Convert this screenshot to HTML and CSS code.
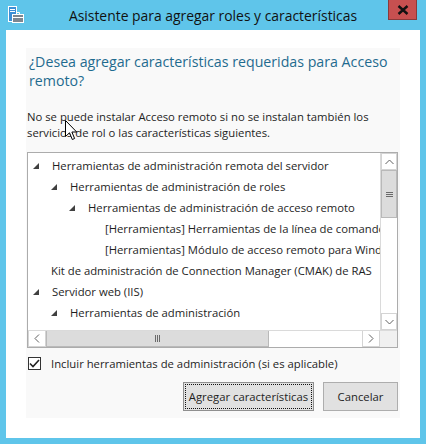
FILE: index.html
```html
<!DOCTYPE html>
<html lang="es">
<head>
<meta charset="utf-8">
<title>Asistente para agregar roles y características</title>
<link rel="stylesheet" href="styles.css">
</head>
<body>
<div class="window">
  <div class="titlebar">
    <svg class="app-icon" width="16" height="17" viewBox="0 0 16 17">
      <rect x="0.5" y="0.5" width="8" height="15" fill="#3d8fd6" stroke="#fff"/>
      <rect x="2" y="3" width="5" height="1" fill="#fff"/>
      <rect x="2" y="5" width="5" height="1" fill="#fff"/>
      <rect x="4.5" y="8.5" width="11" height="8" fill="#7d8791" stroke="#fff"/>
      <path d="M8.5 8.5 V6.5 H11.5 V8.5" fill="none" stroke="#fff"/>
      <rect x="5" y="11" width="10" height="1" fill="#fff"/>
    </svg>
    <div class="title">Asistente para agregar roles y características</div>
    <div class="close">
      <svg width="12" height="10" viewBox="0 0 12 10"><path d="M1.5 1 L10.5 9 M10.5 1 L1.5 9" stroke="#111" stroke-width="2.4"/></svg>
    </div>
  </div>
  <div class="client">
    <div class="panel">
      <h1 class="heading">¿Desea agregar características requeridas para Acceso remoto?</h1>
      <p class="desc">No se puede instalar Acceso remoto si no se instalan también los servicios de rol o las características siguientes.</p>
      <div class="listbox">
        <div class="list-main">
          <div class="rows">
            <div class="row l0"><span class="exp"><svg width="6" height="6" viewBox="0 0 6 6"><path d="M6 0 V6 H0 Z" fill="#404040"/></svg></span>Herramientas de administración remota del servidor</div>
            <div class="row l1"><span class="exp"><svg width="6" height="6" viewBox="0 0 6 6"><path d="M6 0 V6 H0 Z" fill="#404040"/></svg></span>Herramientas de administración de roles</div>
            <div class="row l2"><span class="exp"><svg width="6" height="6" viewBox="0 0 6 6"><path d="M6 0 V6 H0 Z" fill="#404040"/></svg></span>Herramientas de administración de acceso remoto</div>
            <div class="row l4">[Herramientas] Herramientas de la línea de comandos de Acceso remoto</div>
            <div class="row l4">[Herramientas] Módulo de acceso remoto para Windows PowerShell</div>
            <div class="row l1">Kit de administración de Connection Manager (CMAK) de RAS</div>
            <div class="row l0"><span class="exp"><svg width="6" height="6" viewBox="0 0 6 6"><path d="M6 0 V6 H0 Z" fill="#404040"/></svg></span>Servidor web (IIS)</div>
            <div class="row l1"><span class="exp"><svg width="6" height="6" viewBox="0 0 6 6"><path d="M6 0 V6 H0 Z" fill="#404040"/></svg></span>Herramientas de administración</div>
            <div class="row l3">[Herramientas] Consola de administración de IIS</div>
          </div>
          <div class="vscroll">
            <div class="sbtn"><svg width="9" height="6" viewBox="0 0 9 6"><path d="M0.5 5 L4.5 1 L8.5 5" fill="none" stroke="#606060"/></svg></div>
            <div class="vthumb"><svg width="7" height="5" viewBox="0 0 7 5"><path d="M0 0.5 H7 M0 2.5 H7 M0 4.5 H7" stroke="#6a6a6a"/></svg></div>
            <div class="vtrack"></div>
            <div class="sbtn"><svg width="9" height="6" viewBox="0 0 9 6"><path d="M0.5 1 L4.5 5 L8.5 1" fill="none" stroke="#606060"/></svg></div>
          </div>
        </div>
        <div class="hscroll">
          <div class="hbtn"><svg width="6" height="9" viewBox="0 0 6 9"><path d="M5 0.5 L1 4.5 L5 8.5" fill="none" stroke="#606060"/></svg></div>
          <div class="hthumb"><svg width="5" height="7" viewBox="0 0 5 7"><path d="M0.5 0 V7 M2.5 0 V7 M4.5 0 V7" stroke="#6a6a6a"/></svg></div>
          <div class="htrack"></div>
          <div class="hbtn"><svg width="6" height="9" viewBox="0 0 6 9"><path d="M1 0.5 L5 4.5 L1 8.5" fill="none" stroke="#606060"/></svg></div>
          <div class="corner"></div>
        </div>
      </div>
      <label class="check">
        <span class="box"><svg width="11" height="9" viewBox="0 0 11 9"><path d="M1 4.5 L4 7.5 L10 1" fill="none" stroke="#222" stroke-width="1.6"/></svg></span>
        Incluir herramientas de administración (si es aplicable)
      </label>
      <div class="buttons">
        <button class="btn btn-add">Agregar características</button>
        <button class="btn btn-cancel">Cancelar</button>
      </div>
    </div>
  </div>
  <svg class="cursor" width="13" height="21" viewBox="0 0 13 21">
    <path d="M0.5 0.5 V16.5 L4.5 12.8 L7.3 19.5 L9.6 18.5 L6.9 12 L11.7 12 Z" fill="#fff" stroke="#000" stroke-linejoin="round"/>
  </svg>
</div>
</body>
</html>
```
FILE: styles.css
```css
html, body {
  margin: 0;
  padding: 0;
}
body {
  background: #5fc5ea;
  font-family: "Open Sans", "Noto Sans", sans-serif;
  color: #1e1e1e;
}
.window {
  position: relative;
  width: 426px;
  height: 444px;
  overflow: hidden;
  background: #5fc5ea;
}
.titlebar {
  height: 30px;
  display: flex;
  align-items: center;
  justify-content: center;
  position: relative;
}
.app-icon {
  position: absolute;
  left: 8px;
  top: 6px;
}
.title {
  font-size: 13.9px;
  color: #111;
}
.close {
  position: absolute;
  left: 388px;
  top: 0;
  width: 29px;
  height: 20px;
  background: #c75050;
  box-sizing: border-box;
  border: 1px solid #8a3a3a;
  border-top: 0;
  display: flex;
  align-items: center;
  justify-content: center;
}
.client {
  margin: 0 6px;
  height: 408px;
  background: #fff;
  padding: 18px 20px 0 20px;
  box-sizing: border-box;
}
.panel {
  height: 370px;
  background: #f9f9f9;
  box-sizing: border-box;
  padding: 4px 2px 0 1px;
  display: flex;
  flex-direction: column;
}
.heading {
  margin: 0;
  padding-left: 2px;
  font-weight: 400;
  font-size: 14.2px;
  line-height: 19px;
  color: #1f6b8f;
}
.desc {
  margin: 19px 0 0 0;
  font-size: 11.3px;
  line-height: 16px;
  color: #1e1e1e;
}
.listbox {
  margin-top: 11px;
  height: 196px;
  border: 1px solid #acacac;
  box-sizing: border-box;
  background: #fff;
  display: flex;
  flex-direction: column;
}
.list-main {
  flex: 1;
  display: flex;
  min-height: 0;
}
.rows {
  flex: 1;
  overflow: hidden;
  padding-top: 2px;
}
.row {
  height: 21px;
  line-height: 21px;
  white-space: nowrap;
  font-size: 11.3px;
  color: #1e1e1e;
  display: flex;
  align-items: center;
}
.exp {
  width: 19px;
  flex: none;
  display: flex;
  align-items: center;
}
.l0 { padding-left: 5px; }
.l1 { padding-left: 23px; }
.l2 { padding-left: 41px; }
.l3 { padding-left: 41px; }
.l4 { padding-left: 77px; }
.vscroll {
  width: 17px;
  flex: none;
  display: flex;
  flex-direction: column;
  border-left: 1px solid #dadada;
  box-sizing: border-box;
  background: #fff;
}
.sbtn {
  height: 17px;
  flex: none;
  display: flex;
  align-items: center;
  justify-content: center;
  border: 1px solid #d4d4d4;
  box-sizing: border-box;
}
.vthumb {
  height: 48px;
  flex: none;
  background: #dcdcdc;
  border: 1px solid #b9b9b9;
  box-sizing: border-box;
  display: flex;
  align-items: center;
  justify-content: center;
}
.vtrack {
  flex: 1;
}
.hscroll {
  height: 17px;
  flex: none;
  display: flex;
  border-top: 1px solid #dadada;
  box-sizing: border-box;
}
.hbtn {
  width: 18px;
  flex: none;
  display: flex;
  align-items: center;
  justify-content: center;
  border: 1px solid #d4d4d4;
  border-top: 0;
  box-sizing: border-box;
}
.hthumb {
  width: 223px;
  flex: none;
  background: #dcdcdc;
  border: 1px solid #b9b9b9;
  border-top: 0;
  box-sizing: border-box;
  display: flex;
  align-items: center;
  justify-content: center;
}
.htrack {
  flex: 1;
}
.corner {
  width: 17px;
  flex: none;
  background: #f0f0f0;
}
.check {
  margin-top: 7px;
  height: 16px;
  display: flex;
  align-items: center;
  font-size: 11.3px;
  color: #1e1e1e;
  padding-left: 1px;
}
.box {
  width: 13px;
  height: 13px;
  box-sizing: border-box;
  border: 1px solid #333;
  background: #fff;
  display: flex;
  align-items: center;
  justify-content: center;
  margin-right: 10px;
}
.buttons {
  margin-top: 11px;
  display: flex;
  justify-content: flex-end;
  gap: 9px;
}
.btn {
  height: 29px;
  margin: 0;
  padding: 0;
  background: #e1e1e1;
  border: 1px solid #8f8f8f;
  font-family: "Open Sans", "Noto Sans", sans-serif;
  font-size: 11.3px;
  color: #1e1e1e;
}
.btn-add {
  width: 131px;
  outline: 1px dotted #111;
  outline-offset: -3px;
}
.btn-cancel {
  width: 75px;
  border-color: #adadad;
}
.cursor {
  position: absolute;
  left: 65px;
  top: 120px;
}
```
